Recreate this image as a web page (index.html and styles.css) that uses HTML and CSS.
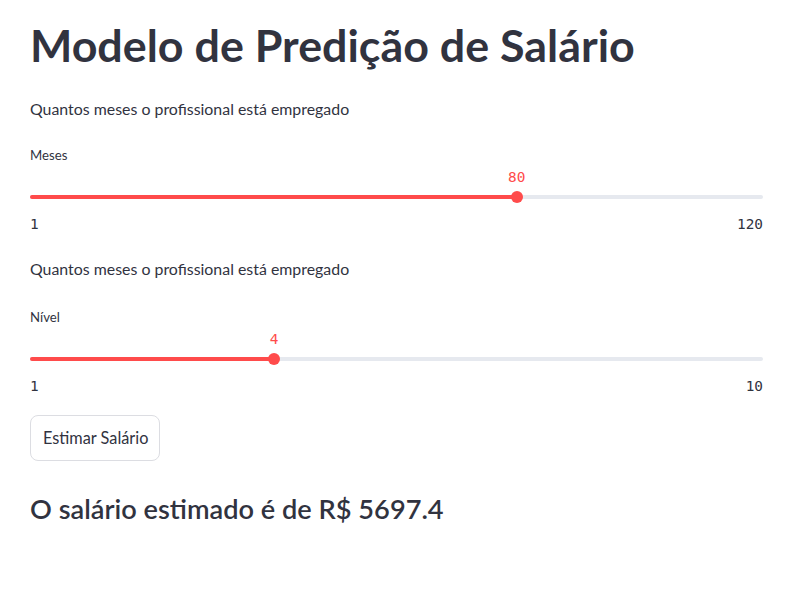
FILE: index.html
```html
<!DOCTYPE html>
<html lang="pt">
<head>
<meta charset="utf-8">
<title>Modelo de Predição de Salário</title>
<link rel="stylesheet" href="styles.css">
</head>
<body>
<main class="main">
  <h1 class="title">Modelo de Predição de Salário</h1>
  <p class="text first">Quantos meses o profissional está empregado</p>
  <div class="slider first-slider">
    <div class="slider-label">Meses</div>
    <div class="slider-value-row">
      <span class="slider-value" style="left: 66.4%">80</span>
    </div>
    <div class="slider-track">
      <div class="slider-fill" style="width: 66.4%"></div>
      <div class="slider-thumb" style="left: 66.4%"></div>
    </div>
    <div class="slider-minmax"><span>1</span><span>120</span></div>
  </div>
  <p class="text second">Quantos meses o profissional está empregado</p>
  <div class="slider second-slider">
    <div class="slider-label">Nível</div>
    <div class="slider-value-row">
      <span class="slider-value" style="left: 33.3%">4</span>
    </div>
    <div class="slider-track">
      <div class="slider-fill" style="width: 33.3%"></div>
      <div class="slider-thumb" style="left: 33.3%"></div>
    </div>
    <div class="slider-minmax"><span>1</span><span>10</span></div>
  </div>
  <button class="button" type="button">Estimar Salário</button>
  <h3 class="result">O salário estimado é de R$ 5697.4</h3>
</main>
</body>
</html>
```
FILE: styles.css
```css
html, body {
  margin: 0;
  padding: 0;
  background: #ffffff;
}
body {
  font-family: "Lato", "Open Sans", sans-serif;
  color: #31333f;
}
.main {
  width: 733px;
  padding: 18px 0 0 30px;
  display: flex;
  flex-direction: column;
  align-items: flex-start;
}
.title {
  margin: 0;
  font-size: 44.8px;
  line-height: 54px;
  font-weight: 700;
  color: #31333f;
}
.text {
  margin: 0;
  font-size: 15.9px;
  line-height: 24px;
}
.text.first { margin-top: 24.5px; }
.text.second { margin-top: 24.5px; }
.slider {
  width: 733px;
  display: flex;
  flex-direction: column;
}
.slider.first-slider { margin-top: 24px; }
.slider.second-slider { margin-top: 26px; }
.slider-label {
  font-size: 13.2px;
  line-height: 20px;
}
.slider-value-row {
  position: relative;
  height: 16px;
  margin-top: 4.5px;
}
.slider-value {
  position: absolute;
  top: 0;
  transform: translateX(-50%);
  font-family: "DejaVu Sans Mono", monospace;
  font-size: 14.4px;
  line-height: 16px;
  color: #ff4b4b;
}
.slider-track {
  position: relative;
  height: 12px;
  margin-top: 6px;
}
.slider-track::before {
  content: "";
  position: absolute;
  left: 0;
  right: 0;
  top: 4px;
  height: 4px;
  border-radius: 2px;
  background: #e6e9ef;
}
.slider-fill {
  position: absolute;
  left: 0;
  top: 4px;
  height: 4px;
  border-radius: 2px;
  background: #ff4b4b;
}
.slider-thumb {
  position: absolute;
  top: 0;
  width: 12px;
  height: 12px;
  margin-left: -6px;
  border-radius: 50%;
  background: #ff4b4b;
}
.slider-minmax {
  margin-top: 13px;
  display: flex;
  justify-content: space-between;
  font-family: "DejaVu Sans Mono", monospace;
  font-size: 14.4px;
  line-height: 16px;
  color: #31333f;
}
.button {
  margin-top: 20.5px;
  height: 46px;
  padding: 0 11px 0 12px;
  border: 1px solid #dcdde2;
  border-radius: 8px;
  background: #ffffff;
  font-family: "Lato", "Open Sans", sans-serif;
  font-size: 16.3px;
  color: #31333f;
}
.result {
  margin: 32.5px 0 0;
  font-size: 27.2px;
  line-height: 32px;
  font-weight: 600;
  color: #31333f;
}
```
